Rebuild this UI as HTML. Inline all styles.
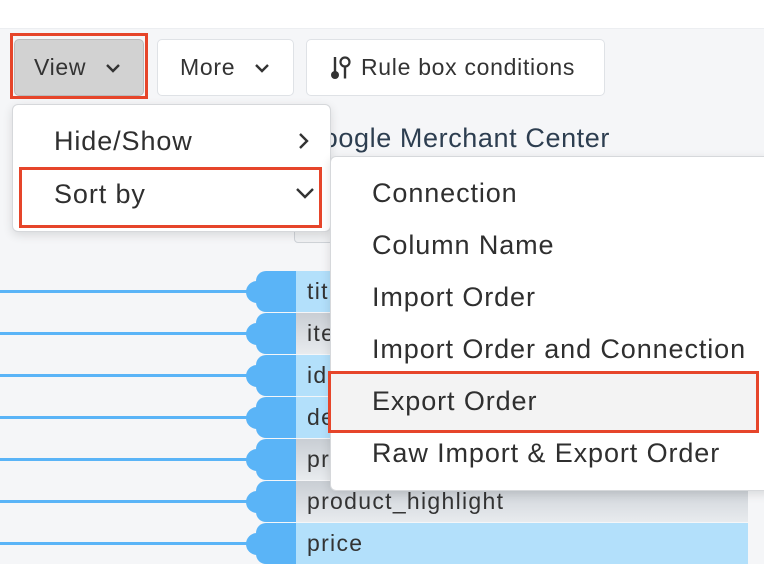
<!DOCTYPE html>
<html><head><style>
body{margin:0;width:764px;height:552px;overflow:hidden;background:#f5f6f8;font-family:"Liberation Sans",sans-serif;position:relative}
.abs{position:absolute}
.top{left:0;top:0;width:764px;height:28px;background:#fff;border-bottom:1px solid #eceef1}
.btn{position:absolute;top:39px;height:57px;border:1px solid #dfe2e6;border-radius:5px;background:#fff;font-size:23px;letter-spacing:0.7px;color:#333;display:flex;align-items:center;box-sizing:border-box;white-space:nowrap}
.red{position:absolute;border:3px solid #e6452a;box-sizing:border-box}
.row{position:absolute;left:296px;width:452px;height:41px;font-size:23px;letter-spacing:1.3px;color:#333;line-height:41px;padding-left:11px;box-sizing:border-box;overflow:hidden}
.b{background:#b3e0fb}.g{background:linear-gradient(#c9ced4,#e8ebee)}
.conn{position:absolute;left:0;width:296px;height:41px}
.conn .ln{position:absolute;left:0;width:260px;top:19px;height:3px;background:#5ab4f7}
.conn .sq{position:absolute;left:256px;width:40px;top:0;height:41px;background:#5ab4f7;border-radius:10px 0 0 10px}
.conn .bm{position:absolute;left:246px;top:10px;width:22px;height:22px;border-radius:50%;background:#5ab4f7}
.menu{position:absolute;background:#fff;border:1px solid #d6d8db;border-radius:6px;box-shadow:0 3px 10px rgba(0,0,0,.12)}
.it{position:absolute;font-size:27px;letter-spacing:0.9px;color:#2f2f2f;line-height:30px;white-space:nowrap}
</style></head><body>
<div class="abs top"></div>
<div class="btn" style="left:14px;width:130px;background:#d2d2d2;border-color:#bbb;padding-left:19px">View<svg style="margin-left:18px" width="18" height="12" viewBox="0 0 18 12"><path d="M3 3l6 6 6-6" fill="none" stroke="#333" stroke-width="2.4"/></svg></div>
<div class="red" style="left:10px;top:33px;width:138px;height:66px"></div>
<div class="btn" style="left:157px;width:137px;padding-left:22px">More<svg style="margin-left:18px" width="18" height="12" viewBox="0 0 18 12"><path d="M3 3l6 6 6-6" fill="none" stroke="#333" stroke-width="2.4"/></svg></div>
<div class="btn" style="left:306px;width:299px;padding-left:22px"><svg width="24" height="26" viewBox="0 0 24 26" style="margin-right:8px"><path d="M6 2v15" stroke="#333" stroke-width="2.4"/><circle cx="6" cy="20" r="4" fill="#333"/><circle cx="16" cy="7" r="4.5" fill="none" stroke="#333" stroke-width="2.2"/><path d="M16 11.5v12" stroke="#333" stroke-width="2.4"/></svg>Rule box conditions</div>
<div class="abs" style="right:154px;top:123px;font-size:27px;letter-spacing:0.6px;color:#2d3e50;white-space:nowrap">Google Merchant Center</div>
<div class="abs" style="left:294px;top:185px;width:60px;height:56px;border:1px solid #cfd3d8;border-radius:4px;background:#f0f1f3"></div>

<div class="conn" style="top:271px"><div class="ln"></div><div class="bm"></div><div class="sq"></div></div><div class="row b" style="top:271px">title</div>
<div class="conn" style="top:313px"><div class="ln"></div><div class="bm"></div><div class="sq"></div></div><div class="row g" style="top:313px">item_group_id</div>
<div class="conn" style="top:355px"><div class="ln"></div><div class="bm"></div><div class="sq"></div></div><div class="row b" style="top:355px">id</div>
<div class="conn" style="top:397px"><div class="ln"></div><div class="bm"></div><div class="sq"></div></div><div class="row b" style="top:397px">description</div>
<div class="conn" style="top:439px"><div class="ln"></div><div class="bm"></div><div class="sq"></div></div><div class="row g" style="top:439px">product_type</div>
<div class="conn" style="top:481px"><div class="ln"></div><div class="bm"></div><div class="sq"></div></div><div class="row g" style="top:481px">product_highlight</div>
<div class="conn" style="top:523px"><div class="ln"></div><div class="bm"></div><div class="sq"></div></div><div class="row b" style="top:523px">price</div>

<div class="menu" style="left:12px;top:104px;width:317px;height:126px"></div>
<div class="it" style="left:54px;top:126px">Hide/Show</div>
<svg class="abs" style="left:296px;top:131px" width="16" height="20" viewBox="0 0 16 20"><path d="M4 3l7 7-7 7" fill="none" stroke="#333" stroke-width="2.4"/></svg>
<div class="it" style="left:54px;top:179px">Sort by</div>
<svg class="abs" style="left:294px;top:186px" width="22" height="14" viewBox="0 0 22 14"><path d="M3 3l8 8 8-8" fill="none" stroke="#333" stroke-width="2.4"/></svg>
<div class="red" style="left:19px;top:167px;width:303px;height:61px"></div>

<div class="menu" style="left:330px;top:156px;width:440px;height:333px;border-radius:6px 0 0 6px"></div>
<div class="abs" style="left:331px;top:374px;width:426px;height:56px;background:#f3f3f3"></div>
<div class="it" style="left:372px;top:178px">Connection</div>
<div class="it" style="left:372px;top:230px">Column Name</div>
<div class="it" style="left:372px;top:282px">Import Order</div>
<div class="it" style="left:372px;top:334px">Import Order and Connection</div>
<div class="it" style="left:372px;top:386px">Export Order</div>
<div class="it" style="left:372px;top:438px">Raw Import &amp; Export Order</div>
<div class="red" style="left:328px;top:371px;width:431px;height:62px"></div>
</body></html>
